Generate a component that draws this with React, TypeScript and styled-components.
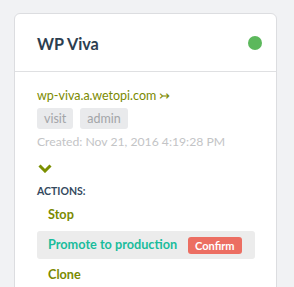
import React from 'react'
import styled, { createGlobalStyle } from 'styled-components'

const GlobalStyle = createGlobalStyle`
  html, body {
    margin: 0;
    padding: 0;
    background: #f1f2f4;
    font-family: Lato, "Open Sans", sans-serif;
  }
`

const Page = styled.div`
  padding: 13px 17px 0 14px;
`

const Card = styled.div`
  background: #fff;
  border: 1px solid #dcdde0;
  border-radius: 6px;
  height: 300px;
`

const CardHeader = styled.div`
  display: flex;
  align-items: center;
  justify-content: space-between;
  height: 57px;
  padding: 0 14px 0 22px;
  border-bottom: 1px solid #dfe0e2;
`

const Title = styled.div`
  color: #2c3e50;
  font-size: 16.2px;
  font-weight: 700;
  margin-top: 2px;
`

const StatusDot = styled.span<{ $color: string }>`
  width: 14px;
  height: 14px;
  border-radius: 50%;
  background: ${({ $color }) => $color};
`

const CardBody = styled.div`
  padding: 14px 21px 0 22px;
`

const SiteLink = styled.a`
  display: block;
  color: #7b8a00;
  font-size: 12.5px;
  line-height: 20px;
  text-decoration: none;
`

const Tags = styled.div`
  display: flex;
  gap: 7px;
  margin-top: 2px;
`

const Tag = styled.span`
  background: #e9eaec;
  color: #a3a5a8;
  font-size: 12.5px;
  height: 21px;
  line-height: 21px;
  padding: 0 7px;
  border-radius: 3px;
`

const Created = styled.div`
  color: #c3c4c6;
  font-size: 12.2px;
  line-height: 20px;
  margin-top: 3px;
`

const Toggle = styled.div`
  margin-top: 12px;
  height: 9px;
  line-height: 0;
  padding-left: 1px;
`

const SectionLabel = styled.div`
  margin-top: 11px;
  color: #34495e;
  font-size: 10.5px;
  font-weight: 700;
  line-height: 14px;
`

const ActionList = styled.div`
  display: flex;
  flex-direction: column;
  gap: 2px;
  margin-top: 3px;
`

const ActionRow = styled.div<{ $active?: boolean }>`
  display: flex;
  align-items: center;
  height: 28px;
  box-sizing: border-box;
  padding: 0 11px;
  border-radius: 3px;
  background: ${({ $active }) => ($active ? '#ececec' : 'transparent')};
`

const ActionName = styled.span<{ $active?: boolean }>`
  color: ${({ $active }) => ($active ? '#1abc9c' : '#7b8a00')};
  font-size: 12.7px;
  font-weight: 700;
  line-height: 20px;
  white-space: nowrap;
  margin-top: -3px;
`

const ConfirmButton = styled.button`
  margin-left: 11px;
  height: 17px;
  padding: 0 7px;
  border: 0;
  border-radius: 3px;
  background: #ec6e62;
  color: #fff;
  font-family: inherit;
  font-size: 11px;
  font-weight: 700;
  line-height: 17px;
  white-space: nowrap;
`

function Chevron() {
  return (
    <svg width="14" height="9" viewBox="0 0 14 9">
      <path d="M1.5 1.5 L7 7 L12.5 1.5" fill="none" stroke="#7b8f00" strokeWidth="3" />
    </svg>
  )
}

const actions = [
  { name: 'Stop' },
  { name: 'Promote to production', active: true },
  { name: 'Clone' },
]

export default function App() {
  return (
    <Page>
      <GlobalStyle />
      <Card>
        <CardHeader>
          <Title>WP Viva</Title>
          <StatusDot $color="#5cb85c" />
        </CardHeader>
        <CardBody>
          <SiteLink href="#">wp-viva.a.wetopi.com ↣</SiteLink>
          <Tags>
            <Tag>visit</Tag>
            <Tag>admin</Tag>
          </Tags>
          <Created>Created: Nov 21, 2016 4:19:28 PM</Created>
          <Toggle>
            <Chevron />
          </Toggle>
          <SectionLabel>ACTIONS:</SectionLabel>
          <ActionList>
            {actions.map(a => (
              <ActionRow key={a.name} $active={a.active}>
                <ActionName $active={a.active}>{a.name}</ActionName>
                {a.active && <ConfirmButton>Confirm</ConfirmButton>}
              </ActionRow>
            ))}
          </ActionList>
        </CardBody>
      </Card>
    </Page>
  )
}
